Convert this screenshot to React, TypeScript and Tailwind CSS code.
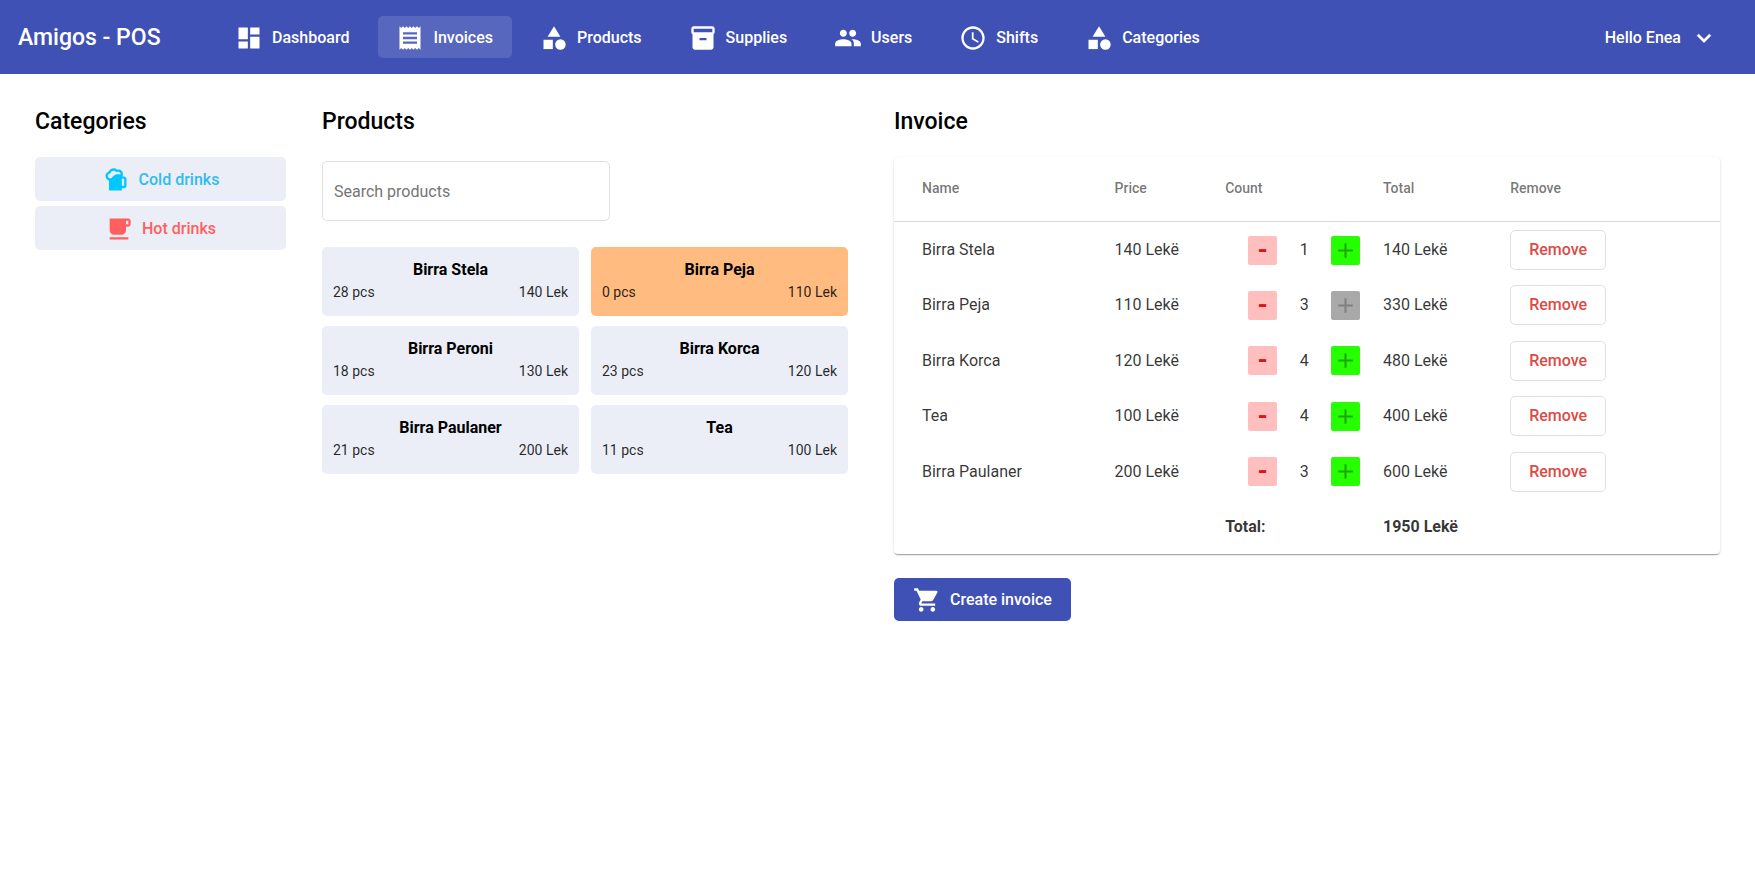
import { useState } from "react";
import type { IconType } from "react-icons";
import {
  MdAdd,
  MdCategory,
  MdDashboard,
  MdFreeBreakfast,
  MdInventory2,
  MdPeople,
  MdReceipt,
  MdSchedule,
  MdShoppingCart,
  MdSportsBar,
} from "react-icons/md";

const NAV: { label: string; icon: IconType; active?: boolean }[] = [
  { label: "Dashboard", icon: MdDashboard },
  { label: "Invoices", icon: MdReceipt, active: true },
  { label: "Products", icon: MdCategory },
  { label: "Supplies", icon: MdInventory2 },
  { label: "Users", icon: MdPeople },
  { label: "Shifts", icon: MdSchedule },
  { label: "Categories", icon: MdCategory },
];

const PRODUCTS = [
  { name: "Birra Stela", stock: 28, price: 140 },
  { name: "Birra Peja", stock: 0, price: 110 },
  { name: "Birra Peroni", stock: 18, price: 130 },
  { name: "Birra Korca", stock: 23, price: 120 },
  { name: "Birra Paulaner", stock: 21, price: 200 },
  { name: "Tea", stock: 11, price: 100 },
];

const LINES = [
  { name: "Birra Stela", price: 140, count: 1 },
  { name: "Birra Peja", price: 110, count: 3, soldOut: true },
  { name: "Birra Korca", price: 120, count: 4 },
  { name: "Tea", price: 100, count: 4 },
  { name: "Birra Paulaner", price: 200, count: 3 },
];

function Header() {
  return (
    <header className="flex min-h-[74px] items-center bg-[#3f51b5] pr-[37px] pl-[18px] text-white">
      <div className="w-[199px] shrink-0 pt-[2px] text-[23px] font-medium">Amigos - POS</div>
      <nav className="flex flex-wrap gap-[10px]">
        {NAV.map(({ label, icon: Icon, active }) => (
          <a
            key={label}
            href="#"
            className={`flex h-[42px] items-center gap-[9px] rounded-[5px] pt-[2px] pr-[19px] pl-[18px] text-base font-medium ${active ? "bg-[#5767be]" : ""}`}
          >
            <Icon size={28} />
            {label}
          </a>
        ))}
      </nav>
      <button type="button" className="ml-auto flex shrink-0 items-center gap-[9px] pt-[2px] text-base font-medium">
        Hello Enea
        <svg viewBox="0 0 24 24" className="h-7 w-7" fill="currentColor" stroke="currentColor" strokeWidth="0.3" aria-hidden="true">
          <path d="M7.41 8.59 12 13.17l4.59-4.58L18 10l-6 6-6-6z" />
        </svg>
      </button>
    </header>
  );
}

function Categories() {
  const button =
    "flex h-11 w-full items-center justify-center gap-[9px] rounded-[5px] bg-[#ebeef7] pt-[2px] text-base font-medium";
  return (
    <section>
      <h2 className="mb-[19px] text-[23px] leading-8 font-medium">Categories</h2>
      <div className="flex flex-col gap-[5px]">
        <button type="button" className={`${button} text-[#2fbdee]`}>
          <MdSportsBar size={28} className="text-[#00c8ff]" />
          Cold drinks
        </button>
        <button type="button" className={`${button} text-[#ff5f5f]`}>
          <MdFreeBreakfast size={28} />
          Hot drinks
        </button>
      </div>
    </section>
  );
}

function Products() {
  const [query, setQuery] = useState("");
  const shown = PRODUCTS.filter((p) => p.name.toLowerCase().includes(query.toLowerCase()));
  return (
    <section className="pr-[10px]">
      <h2 className="mb-[23px] text-[23px] leading-8 font-medium">Products</h2>
      <input
        type="text"
        aria-label="Search products"
        placeholder="Search products"
        value={query}
        onChange={(e) => setQuery(e.target.value)}
        className="block h-[60px] w-[288px] max-w-full rounded-[5px] border border-[#e0e0e0] px-[11px] text-base placeholder:text-[#757575]"
      />
      <div className="mt-[26px] grid grid-cols-2 gap-x-3 gap-y-[10px]">
        {shown.map((p) => (
          <button
            key={p.name}
            type="button"
            className={`h-[69px] rounded-[5px] px-[11px] pb-[2px] ${p.stock === 0 ? "bg-[#ffbb80]" : "bg-[#ebeef7]"}`}
          >
            <span className="block text-base leading-[22px] font-bold">{p.name}</span>
            <span className="flex justify-between text-sm leading-[22px] text-black/85">
              <span>{p.stock} pcs</span>
              <span>{p.price} Lek</span>
            </span>
          </button>
        ))}
      </div>
    </section>
  );
}

function Invoice() {
  const total = LINES.reduce((sum, l) => sum + l.price * l.count, 0);
  return (
    <section>
      <h2 className="mb-[19px] text-[23px] leading-8 font-medium">Invoice</h2>
      <div className="rounded-[4px] bg-white shadow-[0_2px_1px_-1px_rgba(0,0,0,0.2),0_1px_1px_0_rgba(0,0,0,0.14),0_1px_3px_0_rgba(0,0,0,0.12)]">
        <table className="h-[397px] w-full table-fixed text-left text-base text-black/80">
          <colgroup>
            <col className="w-[26.7%]" />
            <col className="w-[13.4%]" />
            <col className="w-[19.1%]" />
            <col className="w-[15.4%]" />
            <col />
          </colgroup>
          <thead>
            <tr className="h-16 border-b border-[#dcdcdc] text-sm text-black/55 [&>th]:pb-[2px]">
              <th className="pl-7 font-medium">Name</th>
              <th className="font-medium">Price</th>
              <th className="font-medium">Count</th>
              <th className="font-medium">Total</th>
              <th className="font-medium">Remove</th>
            </tr>
          </thead>
          <tbody className="[&_td]:pt-[2px]">
            {LINES.map((l) => (
              <tr key={l.name} className="h-[55px]">
                <td className="pl-7">{l.name}</td>
                <td>{l.price} Lekë</td>
                <td>
                  <div className="flex items-center pl-[23px]">
                    <button
                      type="button"
                      aria-label={`Decrease ${l.name}`}
                      className="flex h-[29px] w-[29px] items-center justify-center rounded-[2px] bg-[#ffbfbf] text-[26px] font-bold text-[#d9141b]"
                    >
                      -
                    </button>
                    <span className="w-[54px] text-center">{l.count}</span>
                    <button
                      type="button"
                      aria-label={`Increase ${l.name}`}
                      disabled={l.soldOut}
                      className={`flex h-[29px] w-[29px] items-center justify-center rounded-[2px] ${l.soldOut ? "bg-[#a9a9a9] text-[#808080]" : "bg-[#26ff00] text-[#1da80a]"}`}
                    >
                      <MdAdd size={25} />
                    </button>
                  </div>
                </td>
                <td>{l.price * l.count} Lekë</td>
                <td>
                  <button
                    type="button"
                    className="block h-10 w-24 rounded-[5px] border border-[#e0e0e0] bg-white font-medium text-[#dd4a45]"
                  >
                    Remove
                  </button>
                </td>
              </tr>
            ))}
            <tr className="h-[55px] font-bold">
              <td />
              <td />
              <td>Total:</td>
              <td>{total} Lekë</td>
              <td />
            </tr>
          </tbody>
        </table>
      </div>
      <button
        type="button"
        className="mt-6 flex h-[43px] items-center gap-[9px] rounded-[5px] bg-[#3f51b5] px-[19px] text-base font-medium text-white"
      >
        <MdShoppingCart size={28} />
        Create invoice
      </button>
    </section>
  );
}

export default function App() {
  return (
    <div className="min-h-screen bg-white font-[Roboto,sans-serif] text-black">
      <Header />
      <main className="grid grid-cols-[minmax(0,251fr)_minmax(0,536fr)_minmax(0,826fr)] gap-9 px-[35px] py-8">
        <Categories />
        <Products />
        <Invoice />
      </main>
    </div>
  );
}
